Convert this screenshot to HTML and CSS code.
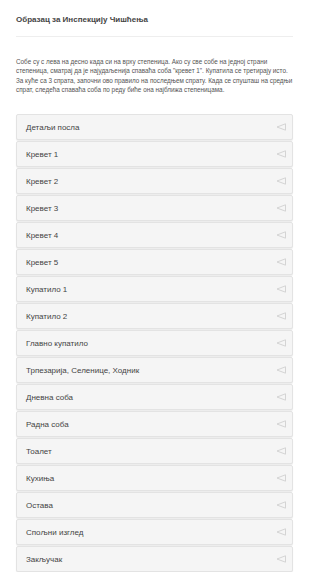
FILE: index.html
```html
<!DOCTYPE html>
<html lang="sr">
<head>
    <meta charset="UTF-8">
    <meta name="viewport" content="width=device-width, initial-scale=1.0">
    <title>Образац за Инспекцију Чишћења</title>
    <link rel="stylesheet" href="styles.css">
</head>
<body>
    <div class="page">
        <header>
            <h1>Образац за Инспекцију Чишћења</h1>
        </header>

        <p class="intro">Собе су с лева на десно када си на врху степеница. Ако су све собе на једној страни степеница, сматрај да је најудаљенија спаваћа соба "кревет 1". Купатила се третирају исто. За куће са 3 спрата, започни ово правило на последњем спрату. Када се спушташ на средњи спрат, следећа спаваћа соба по реду биће она најближа степеницама.</p>

        <section class="sections">
            <div class="panel"><span>Детаљи посла</span><svg class="arrow" viewBox="0 0 10 8"><path d="M9.5 0.8 L1 4 L9.5 7.2 Z"/></svg></div>
            <div class="panel"><span>Кревет 1</span><svg class="arrow" viewBox="0 0 10 8"><path d="M9.5 0.8 L1 4 L9.5 7.2 Z"/></svg></div>
            <div class="panel"><span>Кревет 2</span><svg class="arrow" viewBox="0 0 10 8"><path d="M9.5 0.8 L1 4 L9.5 7.2 Z"/></svg></div>
            <div class="panel"><span>Кревет 3</span><svg class="arrow" viewBox="0 0 10 8"><path d="M9.5 0.8 L1 4 L9.5 7.2 Z"/></svg></div>
            <div class="panel"><span>Кревет 4</span><svg class="arrow" viewBox="0 0 10 8"><path d="M9.5 0.8 L1 4 L9.5 7.2 Z"/></svg></div>
            <div class="panel"><span>Кревет 5</span><svg class="arrow" viewBox="0 0 10 8"><path d="M9.5 0.8 L1 4 L9.5 7.2 Z"/></svg></div>
            <div class="panel"><span>Купатило 1</span><svg class="arrow" viewBox="0 0 10 8"><path d="M9.5 0.8 L1 4 L9.5 7.2 Z"/></svg></div>
            <div class="panel"><span>Купатило 2</span><svg class="arrow" viewBox="0 0 10 8"><path d="M9.5 0.8 L1 4 L9.5 7.2 Z"/></svg></div>
            <div class="panel"><span>Главно купатило</span><svg class="arrow" viewBox="0 0 10 8"><path d="M9.5 0.8 L1 4 L9.5 7.2 Z"/></svg></div>
            <div class="panel"><span>Трпезарија, Селенице, Ходник</span><svg class="arrow" viewBox="0 0 10 8"><path d="M9.5 0.8 L1 4 L9.5 7.2 Z"/></svg></div>
            <div class="panel"><span>Дневна соба</span><svg class="arrow" viewBox="0 0 10 8"><path d="M9.5 0.8 L1 4 L9.5 7.2 Z"/></svg></div>
            <div class="panel"><span>Радна соба</span><svg class="arrow" viewBox="0 0 10 8"><path d="M9.5 0.8 L1 4 L9.5 7.2 Z"/></svg></div>
            <div class="panel"><span>Тоалет</span><svg class="arrow" viewBox="0 0 10 8"><path d="M9.5 0.8 L1 4 L9.5 7.2 Z"/></svg></div>
            <div class="panel"><span>Кухиња</span><svg class="arrow" viewBox="0 0 10 8"><path d="M9.5 0.8 L1 4 L9.5 7.2 Z"/></svg></div>
            <div class="panel"><span>Остава</span><svg class="arrow" viewBox="0 0 10 8"><path d="M9.5 0.8 L1 4 L9.5 7.2 Z"/></svg></div>
            <div class="panel"><span>Спољни изглед</span><svg class="arrow" viewBox="0 0 10 8"><path d="M9.5 0.8 L1 4 L9.5 7.2 Z"/></svg></div>
            <div class="panel"><span>Закључак</span><svg class="arrow" viewBox="0 0 10 8"><path d="M9.5 0.8 L1 4 L9.5 7.2 Z"/></svg></div>
        </section>
    </div>
</body>
</html>
```

FILE: styles.css
```css
* {
    margin: 0;
    padding: 0;
    box-sizing: border-box;
}

body {
    font-family: "Liberation Sans", Arial, sans-serif;
    background-color: #fff;
    color: #333;
}

.page {
    padding: 14px 17px 0 16px;
}

header {
    padding-bottom: 10px;
    border-bottom: 1px solid #eee;
}

h1 {
    font-size: 8px;
    font-weight: bold;
    color: #444;
    line-height: 12px;
}

.intro {
    margin-top: 20px;
    font-size: 6.35px;
    line-height: 9.3px;
    color: #555;
}

.sections {
    margin-top: 20px;
    display: flex;
    flex-direction: column;
    gap: 1px;
}

.panel {
    height: 26px;
    display: flex;
    align-items: center;
    justify-content: space-between;
    padding: 0 6px 0 9px;
    background-color: #f5f5f5;
    border: 1px solid #e3e3e3;
    border-radius: 2px;
    box-shadow: 0 1px 1px rgba(0, 0, 0, 0.08);
    font-size: 8px;
    color: #444;
}

.arrow {
    width: 10px;
    height: 8px;
    fill: none;
    stroke: #d0d0d0;
    stroke-width: 0.9;
    stroke-linejoin: round;
}
```
